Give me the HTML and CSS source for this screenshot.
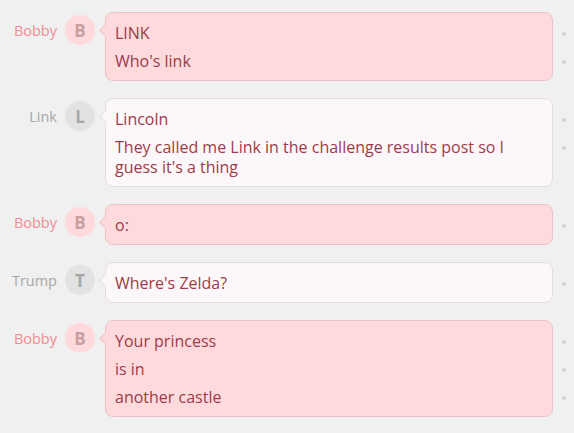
FILE: index.html
```html
<!DOCTYPE html>
<html>
<head>
<meta charset="utf-8">
<link rel="stylesheet" href="styles.css">
</head>
<body>
<div class="chat">
  <div class="row mine">
    <div class="name">Bobby</div>
    <div class="avatar">B</div>
    <div class="bubble">
      <p>LINK</p>
      <p>Who's link</p>
    </div>
  </div>
  <div class="row other">
    <div class="name">Link</div>
    <div class="avatar">L</div>
    <div class="bubble">
      <p>Lincoln</p>
      <p>They called me Link in the challenge results post so I guess it's a thing</p>
    </div>
  </div>
  <div class="row mine">
    <div class="name">Bobby</div>
    <div class="avatar">B</div>
    <div class="bubble">
      <p>o:</p>
    </div>
  </div>
  <div class="row other">
    <div class="name">Trump</div>
    <div class="avatar">T</div>
    <div class="bubble">
      <p>Where's Zelda?</p>
    </div>
  </div>
  <div class="row mine">
    <div class="name">Bobby</div>
    <div class="avatar">B</div>
    <div class="bubble">
      <p>Your princess</p>
      <p>is in</p>
      <p>another castle</p>
    </div>
  </div>
</div>
</body>
</html>
```

FILE: styles.css
```css
html, body {
  margin: 0;
  padding: 0;
  background: #f0f0f0;
}
body {
  font-family: "Open Sans", "Noto Sans", sans-serif;
}
.chat {
  display: flex;
  flex-direction: column;
  gap: 17px;
  padding: 12px 21px 12px 0;
}
.row {
  display: flex;
  align-items: flex-start;
}
.name {
  width: 57px;
  text-align: right;
  font-size: 14.5px;
  line-height: 30px;
  margin-top: 4px;
  flex: none;
}
.avatar {
  width: 30px;
  height: 30px;
  border-radius: 50%;
  margin: 3px 10px 0 8px;
  flex: none;
  display: flex;
  align-items: center;
  justify-content: center;
  font-weight: bold;
  font-size: 17px;
}
.bubble {
  flex: 1;
  position: relative;
  border: 1px solid;
  border-radius: 8px;
  padding: 10px 9px 9px;
}
.bubble::before {
  content: "";
  position: absolute;
  left: -5px;
  top: 13px;
  width: 8px;
  height: 8px;
  transform: rotate(45deg);
  border-left: 1px solid;
  border-bottom: 1px solid;
  border-color: inherit;
  background: inherit;
}
.bubble p {
  margin: 0;
  font-size: 16px;
  line-height: 20px;
  color: #9c3c4a;
  position: relative;
}
.bubble p + p {
  margin-top: 8px;
}
.bubble p::after {
  content: "";
  position: absolute;
  right: -23px;
  top: 9px;
  width: 4px;
  height: 4px;
  border-radius: 50%;
  background: #d2d2d2;
}
.mine .name { color: #f38b94; }
.mine .avatar { background: #ffd9dc; color: #c79ea2; }
.mine .bubble { background: #ffdadd; border-color: #ecc2c5; }
.other .name { color: #a6a6a6; }
.other .avatar { background: #e2e2e2; color: #a8a8a8; }
.other .bubble { background: #fcf7f8; border-color: #e3dddf; }
```
